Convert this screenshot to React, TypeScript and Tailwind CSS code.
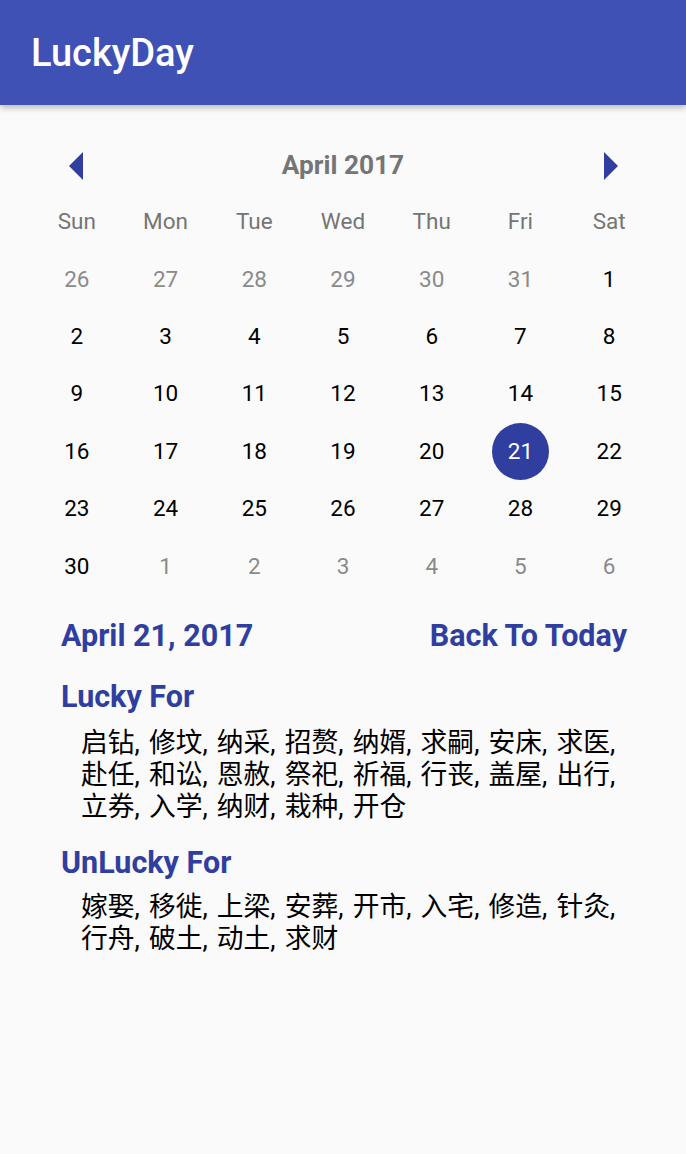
const weekDays = ["Sun", "Mon", "Tue", "Wed", "Thu", "Fri", "Sat"];

type Day = { n: number; cur: boolean };

const days: Day[] = [
  ...[26, 27, 28, 29, 30, 31].map((n) => ({ n, cur: false })),
  ...Array.from({ length: 30 }, (_, i) => ({ n: i + 1, cur: true })),
  ...[1, 2, 3, 4, 5, 6].map((n) => ({ n, cur: false })),
];

const lucky = ["启钻", "修坟", "纳采", "招赘", "纳婿", "求嗣", "安床", "求医", "赴任", "和讼", "恩赦", "祭祀", "祈福", "行丧", "盖屋", "出行", "立券", "入学", "纳财", "栽种", "开仓"];
const unlucky = ["嫁娶", "移徙", "上梁", "安葬", "开市", "入宅", "修造", "针灸", "行舟", "破土", "动土", "求财"];

const Arrow = ({ dir }: { dir: "left" | "right" }) => (
  <svg width="16" height="28" viewBox="0 0 16 28">
    {dir === "left" ? (
      <polygon points="15,0 15,28 1,14" fill="#303F9F" />
    ) : (
      <polygon points="1,0 1,28 15,14" fill="#303F9F" />
    )}
  </svg>
);

const Items = ({ list }: { list: string[] }) => (
  <p className="pl-[20px] text-[26.75px] leading-[32px] text-black [word-spacing:2.5px]">
    {list.map((w, i) => (
      <span key={w + i}>
        <span className="whitespace-nowrap">
          {w}
          {i < list.length - 1 ? "," : ""}
        </span>
        {i < list.length - 1 ? " " : ""}
      </span>
    ))}
  </p>
);

const App = () => (
  <div className="min-h-[1154px] bg-[#FAFAFA] font-['Roboto','Noto_Sans_CJK_SC',sans-serif]">
    <header className="flex h-[105px] items-center bg-[#3F51B5] px-[31px] shadow-[0_3px_6px_rgba(0,0,0,0.25)]">
      <h1 className="pt-[1px] text-[38px] font-medium text-white">LuckyDay</h1>
    </header>

    <div className="mx-[32.5px] mt-[32px]">
      <div className="grid h-[57.4px] grid-cols-7 items-center">
        <div className="flex justify-center pr-[2px]">
          <Arrow dir="left" />
        </div>
        <div className="col-span-5 text-center text-[26.25px] font-bold text-[#757575]">April 2017</div>
        <div className="flex justify-center pl-[3px]">
          <Arrow dir="right" />
        </div>
      </div>
      <div className="-mt-[1px] grid grid-cols-7">
        {weekDays.map((d) => (
          <div key={d} className="flex h-[57.4px] items-center justify-center text-[22.5px] text-[#757575]">
            {d}
          </div>
        ))}
        {days.map((d, i) => {
          const selected = d.cur && d.n === 21;
          return (
            <div key={i} className="flex h-[57.4px] items-center justify-center">
              {selected ? (
                <span className="flex h-[57px] w-[57px] items-center justify-center rounded-full bg-[#303F9F] text-[22.5px] text-white">
                  {d.n}
                </span>
              ) : (
                <span className={`text-[22.5px] ${d.cur ? "text-[#000000]" : "text-[#8a8a8a]"}`}>{d.n}</span>
              )}
            </div>
          );
        })}
      </div>
    </div>

    <div className="pl-[61px] pr-[59px] pt-[18px]">
      <div className="flex items-center justify-between text-[30.5px] font-bold text-[#303F9F]">
        <span>April 21, 2017</span>
        <span>Back To Today</span>
      </div>

      <h2 className="mt-[20px] text-[30.5px] font-bold leading-[36px] text-[#303F9F]">Lucky For</h2>
      <div className="mt-[12px]">
        <Items list={lucky} />
      </div>

      <h2 className="mt-[22px] text-[30.5px] font-bold leading-[36px] text-[#303F9F]">UnLucky For</h2>
      <div className="mt-[10px]">
        <Items list={unlucky} />
      </div>
    </div>
  </div>
);

export default App;
